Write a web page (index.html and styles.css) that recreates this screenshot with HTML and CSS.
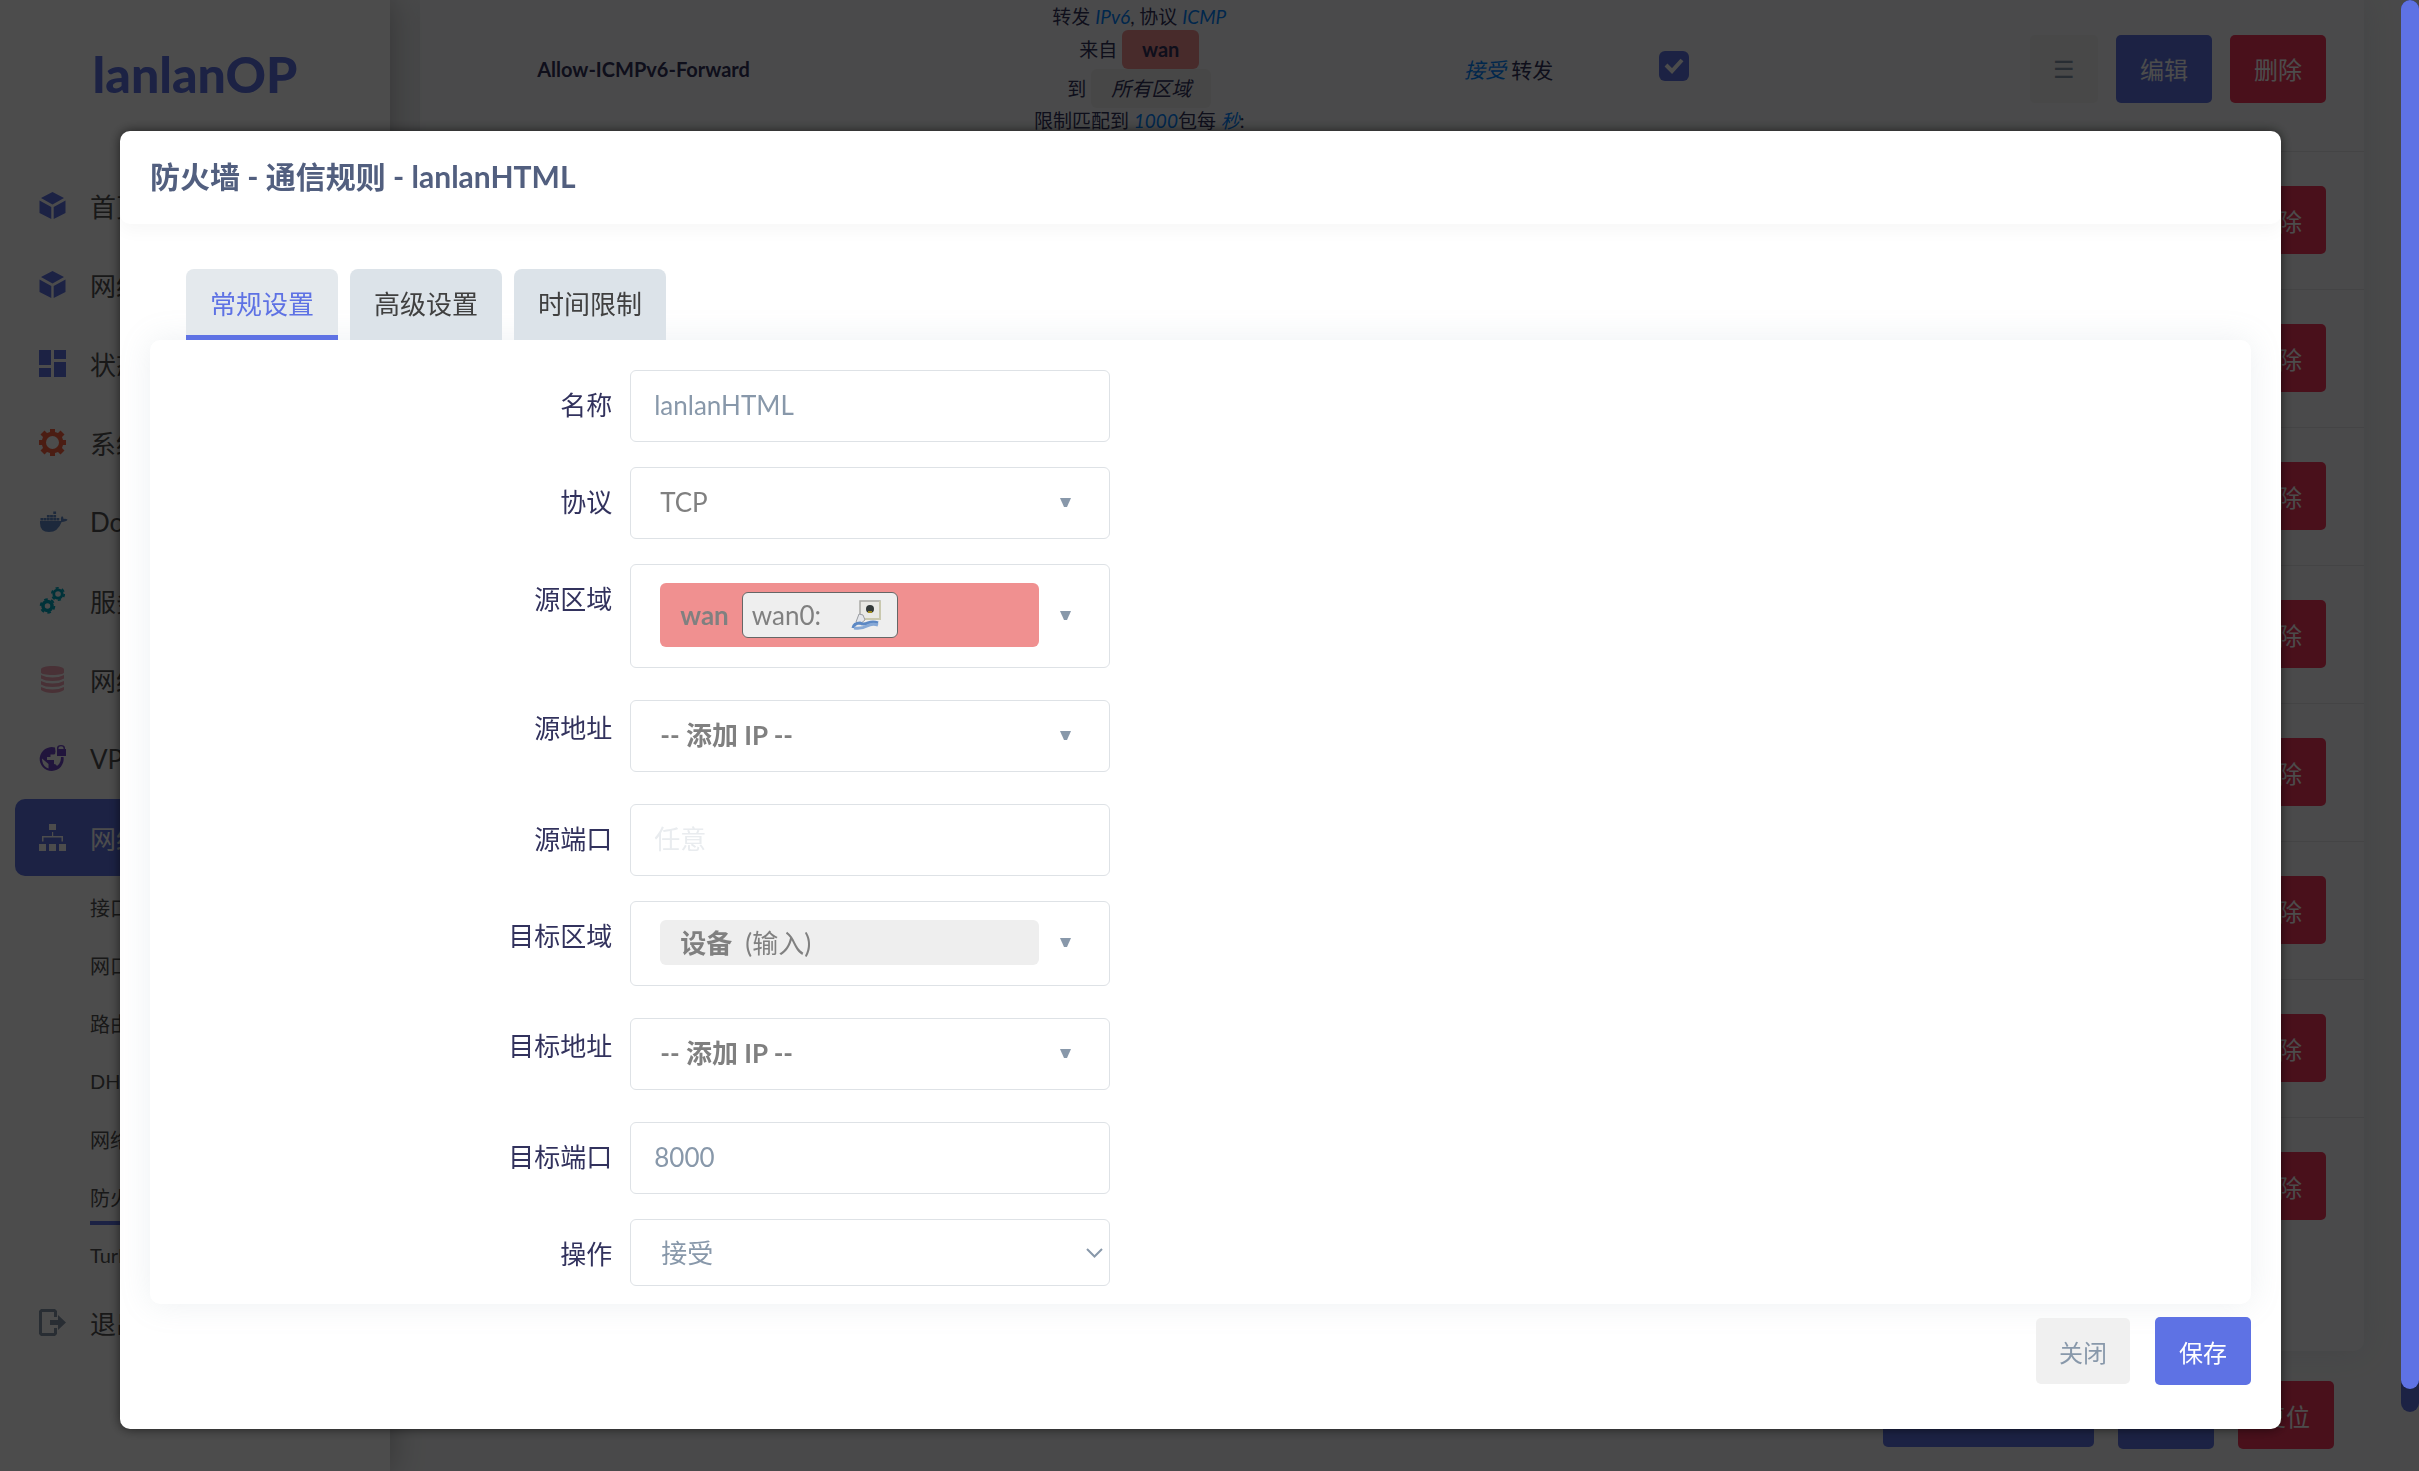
FILE: index.html
```html
<!DOCTYPE html>
<html lang="zh-CN">
<head>
<meta charset="utf-8">
<title>lanlanOP - 防火墙</title>
<link rel="stylesheet" href="styles.css">
</head>
<body>
<div class="app">
  <aside class="sidebar">
    <a class="brand" href="#">lanlanOP</a>
    <nav class="nav">
      <a class="nav-item" href="#"><svg class="icon indigo" viewBox="0 0 27 27"><path d="M13.500 0 25 6 13.500 12.500 2 6zM0.500 8.500 12.300 15V27L0.500 21zM26.500 8.500 14.700 15V27L26.500 21z"/></svg>首页</a>
      <a class="nav-item" href="#"><svg class="icon indigo" viewBox="0 0 27 27"><path d="M13.500 0 25 6 13.500 12.500 2 6zM0.500 8.500 12.300 15V27L0.500 21zM26.500 8.500 14.700 15V27L26.500 21z"/></svg>网络向导</a>
      <a class="nav-item" href="#"><svg class="icon indigo" viewBox="0 0 27 27"><path d="M0 0h12v15H0zM15 0h12v9H15zM0 18h12v9H0zM15 12h12v15H15z"/></svg>状态</a>
      <a class="nav-item" href="#"><svg class="icon orange" viewBox="0 0 27 27"><path fill-rule="evenodd" d="M11 0h5v3l3 1 2.500-2.500 4 4L23 8l1 3h3v5h-3l-1 3 2.500 2.500-4 4L19 23l-3 1v3h-5v-3l-3-1-2.500 2.500-4-4L4 19l-1-3H0v-5h3l1-3-2.500-2.500 4-4L8 4l3-1zM13.500 7a6.500 6.500 0 1 0 0 13 6.500 6.500 0 0 0 0-13z"/></svg>系统</a>
      <a class="nav-item" href="#"><svg class="icon docker" viewBox="0 0 27 27"><path d="M1 13h21q-1-3 1-5 1.500 1 1.600 3 2.500-.5 4 .8-1.500 2-6 2.200Q19 24 10 24 1 24 1 15zM1.500 10h2.800v2.500H1.500zM4.700 10h2.800v2.500H4.700zM7.900 10h2.800v2.500H7.900zM11.100 10h2.800v2.500h-2.800zM14.300 10h2.800v2.500h-2.800zM17.500 10h2.800v2.500h-2.800zM7.900 7h2.800v2.500H7.900zM11.100 7h2.800v2.500h-2.800zM14.300 7h2.800v2.500h-2.800zM14.300 3.500h2.800V6h-2.800z"/></svg>Docker</a>
      <a class="nav-item" href="#"><svg class="icon cyan" viewBox="0 0 27 27"><g fill="none" stroke="#00a9c0"><circle cx="8.500" cy="19" r="4.500" stroke-width="3.500"/><circle cx="8.500" cy="19" r="6.800" stroke-width="2" stroke-dasharray="3.600 3.520"/><circle cx="19" cy="7" r="4.200" stroke-width="2.800"/><circle cx="19" cy="7" r="6.200" stroke-width="1.800" stroke-dasharray="3.200 3.290"/></g></svg>服务</a>
      <a class="nav-item" href="#"><svg class="icon pink" viewBox="0 0 27 27"><path d="M2 3.500C2 1.500 7 0 13.500 0S25 1.500 25 3.500v3C25 8 20 9 13.500 9S2 8 2 6.500zM2 9q5 2.500 11.500 2.500T25 9v3.500q-4 2.500-11.500 2.500T2 12.500zM2 15q5 2.500 11.500 2.500T25 15v3.500q-4 2.500-11.500 2.500T2 18.500zM2 21q5 2.500 11.500 2.500T25 21v3q-4 3-11.500 3T2 24z"/></svg>网络存储</a>
      <a class="nav-item" href="#"><svg class="icon violet" viewBox="0 0 27 27"><path fill-rule="evenodd" d="M16 2.500A12 12 0 1 0 24.500 12h-2.600q.4 6-3.900 9-.8-2-3-2v-4H8v-3h3.500V9.500H15q1.500-.5 1.500-3zM3 13.500 9.500 19v4.500Q3 21 3 13.500z"/><path fill-rule="evenodd" d="M18 4V3a4 3 0 0 1 8 0v1h1v7h-9zM19.500 4h5V3a2.500 1.800 0 0 0-5 0z"/></svg>VPN</a>
      <a class="nav-item active" href="#"><svg class="icon white" viewBox="0 0 27 27"><path d="M10 0h7v6h-7zM13 8h1.200v4H24v5.500h-1.500v-4H4.500v4H3V12h10zM0 20h7v7H0zM10 20h7v7h-7zM20 20h7v7h-7z"/></svg>网络</a>
      <div class="subnav">
        <a href="#"><span>接口</span></a>
        <a href="#"><span>网口配置</span></a>
        <a href="#"><span>路由</span></a>
        <a href="#"><span>DHCP/DNS</span></a>
        <a href="#"><span>网络诊断</span></a>
        <a href="#" class="current"><span>防火墙</span></a>
        <a href="#"><span>Turbo ACC</span></a>
      </div>
      <a class="nav-item" href="#"><svg class="icon slate" viewBox="0 0 27 27"><path d="M2 0h14l2 2v6h-3V3H3v21h12v-5h3v6l-2 2H2l-2-2V2zM11 11h8V6l8 7.500-8 7.500v-5h-8z"/></svg>退出</a>
    </nav>
  </aside>

  <main class="main">
    <div class="card">
      <table class="rules">
        <colgroup><col class="c-name"><col class="c-match"><col class="c-action"><col class="c-on"><col></colgroup>
        <tbody>
          <tr class="first">
            <td class="name">Allow-ICMPv6-Forward</td>
            <td class="match">
              <div>转发 <var>IPv6</var>, 协议 <var>ICMP</var></div>
              <div class="zone-line">来自 <span class="zone wan"><b>wan</b></span></div>
              <div class="zone-line">到 <span class="zone any"><em>所有区域</em></span></div>
              <div>限制匹配到 <var>1000</var>包每 <var>秒</var>:</div>
            </td>
            <td class="verdict"><var>接受</var> 转发</td>
            <td class="enabled"><input class="check" type="checkbox" aria-label="启用" checked></td>
            <td class="ops"><div><button class="btn light">☰</button><button class="btn primary">编辑</button><button class="btn danger">删除</button></div></td>
          </tr>
          <tr><td></td><td></td><td></td><td></td><td class="ops"><div><button class="btn danger">删除</button></div></td></tr>
          <tr><td></td><td></td><td></td><td></td><td class="ops"><div><button class="btn danger">删除</button></div></td></tr>
          <tr><td></td><td></td><td></td><td></td><td class="ops"><div><button class="btn danger">删除</button></div></td></tr>
          <tr><td></td><td></td><td></td><td></td><td class="ops"><div><button class="btn danger">删除</button></div></td></tr>
          <tr><td></td><td></td><td></td><td></td><td class="ops"><div><button class="btn danger">删除</button></div></td></tr>
          <tr><td></td><td></td><td></td><td></td><td class="ops"><div><button class="btn danger">删除</button></div></td></tr>
          <tr><td></td><td></td><td></td><td></td><td class="ops"><div><button class="btn danger">删除</button></div></td></tr>
          <tr><td></td><td></td><td></td><td></td><td class="ops"><div><button class="btn danger">删除</button></div></td></tr>
        </tbody>
      </table>
    </div>
    <div class="page-actions">
      <button class="btn primary apply">保存并应用</button>
      <button class="btn primary">保存</button>
      <button class="btn danger">复位</button>
    </div>
  </main>
  <div class="page-scroll"></div>
</div>

<div class="overlay">
  <section class="modal" role="dialog" aria-labelledby="dlg-title">
    <h4 class="modal-title" id="dlg-title">防火墙 - 通信规则 - lanlanHTML</h4>
    <div class="modal-body">
      <div class="tabs" role="tablist">
        <button class="tab selected" role="tab" aria-selected="true">常规设置</button>
        <button class="tab" role="tab">高级设置</button>
        <button class="tab" role="tab">时间限制</button>
      </div>
      <form class="panel">
        <div class="row">
          <label for="f-name">名称</label>
          <input class="field" id="f-name" type="text" value="lanlanHTML">
        </div>
        <div class="row">
          <label for="f-proto">协议</label>
          <button type="button" class="field drop" id="f-proto"><span>TCP</span><svg class="arrow" viewBox="0 0 11 9"><path d="M0 0h11L7 9H4z"/></svg></button>
        </div>
        <div class="row">
          <label for="f-src">源区域</label>
          <button type="button" class="field drop" id="f-src">
            <span class="badge red"><b>wan</b>
              <span class="iface">wan0:
                <svg class="port" viewBox="0 0 30 30"><path d="M9 1h20v18H9z" fill="#e9e9e5" stroke="#a9a9a5" stroke-width="1.500"/><path d="M29 1v18H9" fill="none" stroke="#c9c8ae" stroke-width="2"/><circle cx="19" cy="9" r="4" fill="#333a3a"/><path d="M17 11h4v2h-4z" fill="#a08d20"/><path d="M8 14l4 1 2 5-5 4-4-2z" fill="#e4e6ea" stroke="#9a9da3"/><path d="M2 28q1-5 7-5 3 2 8 0 5-2 10 0" fill="none" stroke="#5c88c4" stroke-width="3"/><path d="M3 28q8 1 13-2t11-1" fill="none" stroke="#86a8d6" stroke-width="3"/></svg>
              </span>
            </span>
            <svg class="arrow" viewBox="0 0 11 9"><path d="M0 0h11L7 9H4z"/></svg>
          </button>
        </div>
        <div class="row list">
          <label for="f-srcip">源地址</label>
          <button type="button" class="field drop" id="f-srcip"><b>-- 添加 IP --</b><svg class="arrow" viewBox="0 0 11 9"><path d="M0 0h11L7 9H4z"/></svg></button>
        </div>
        <div class="row">
          <label for="f-sport">源端口</label>
          <input class="field" id="f-sport" type="text" placeholder="任意">
        </div>
        <div class="row">
          <label for="f-dst">目标区域</label>
          <button type="button" class="field drop" id="f-dst"><span class="badge gray"><b>设备</b><span>(输入)</span></span><svg class="arrow" viewBox="0 0 11 9"><path d="M0 0h11L7 9H4z"/></svg></button>
        </div>
        <div class="row list">
          <label for="f-dstip">目标地址</label>
          <button type="button" class="field drop" id="f-dstip"><b>-- 添加 IP --</b><svg class="arrow" viewBox="0 0 11 9"><path d="M0 0h11L7 9H4z"/></svg></button>
        </div>
        <div class="row">
          <label for="f-dport">目标端口</label>
          <input class="field" id="f-dport" type="text" value="8000">
        </div>
        <div class="row">
          <label for="f-target">操作</label>
          <div class="select-wrap">
            <select class="field" id="f-target"><option>接受</option></select>
            <svg class="chevron" viewBox="0 0 17 10"><path d="M1 1l7.500 7.500L16 1"/></svg>
          </div>
        </div>
      </form>
      <div class="modal-actions">
        <button class="btn close">关闭</button>
        <button class="btn primary">保存</button>
      </div>
    </div>
  </section>
  <div class="overlay-scroll"></div>
</div>
</body>
</html>
```
FILE: styles.css
```css
* { box-sizing: border-box; }

html, body { height: 100%; margin: 0; overflow: hidden; }

body {
  font-family: Lato, "Noto Sans CJK SC", sans-serif;
  font-size: 26px;
  color: #32325d;
  background: #f4f5f7;
}

button, input, select { font: inherit; margin: 0; }
button { border: 0; cursor: pointer; }
a { color: inherit; text-decoration: none; }

/* page behind the dialog */
.app { display: flex; height: 100vh; overflow: hidden; }

.sidebar {
  flex: 0 0 390px;
  background: #fff;
  box-shadow: 0 0 32px rgba(0, 0, 0, .3);
  z-index: 1;
}

.brand {
  display: block;
  padding-top: 44px;
  height: 167px;
  font-size: 50px;
  font-weight: 900;
  line-height: 60px;
  text-align: center;
  color: #5e72e4;
}

.nav-item {
  display: flex;
  align-items: center;
  gap: 24px;
  height: 77px;
  margin: 0 15px 2px;
  padding-left: 24px;
  border-radius: 10px;
  color: #525252;
  white-space: nowrap;
}
.nav-item.active { background: #5e72e4; color: #fff; }

.icon { width: 27px; height: 27px; overflow: visible; }
.indigo { fill: #5e72e4; }
.orange { fill: #fb6340; }
.docker { fill: #6189c8; }
.pink { fill: #f3a4b5; }
.violet { fill: #7048c8; }
.white { fill: #fff; }
.slate { fill: #8898aa; }

.subnav { padding-left: 90px; font-size: 20px; color: #525252; }
.subnav a { display: flex; align-items: center; height: 58px; }
.current { position: relative; }
.current::after {
  content: "";
  position: absolute;
  left: 0;
  bottom: 1px;
  width: 60px;
  height: 4px;
  background: #5e72e4;
}

.main { flex: 1; padding: 0 37px 0 30px; }

.card {
  background: #f8f9fb;
  border-radius: 0 0 10px 10px;
  padding-bottom: 96px;
  box-shadow: 0 0 32px rgba(136, 152, 170, .15);
}

.rules { width: 100%; table-layout: fixed; border-collapse: collapse; text-align: center; }
.rules td { height: 138px; padding: 0; border-bottom: 1px solid #e4e5e8; }
.rules tr:last-child td { border-bottom: 0; }
.rules .first td { height: 151px; padding-bottom: 13px; }
.rules .first .enabled { padding-bottom: 22px; }
.c-name { width: 23%; }
.c-match { width: 28%; }
.c-action { width: 10%; }
.c-on { width: 7%; }

.name { font-size: 20px; font-weight: 700; }
.match { font-size: 19px; line-height: 26px; }
.zone-line { line-height: 39px; }
.zone { display: inline-block; height: 39px; padding: 0 20px; border-radius: 6px; font-size: 20px; }
.wan { background: #f09090; }
.any { background: #eee; }
.verdict { font-size: 21px; }
.rules var { color: #0082ff; }

.check {
  appearance: none;
  width: 30px;
  height: 30px;
  margin: 0;
  vertical-align: middle;
  border-radius: 6px;
  background: #5e72e4 url('data:image/svg+xml,<svg xmlns="http://www.w3.org/2000/svg" viewBox="0 0 30 30"><path d="M7 14l6 6L23 9" fill="none" stroke="white" stroke-width="4"/></svg>');
}

.ops > div { display: flex; justify-content: flex-end; gap: 18px; padding-right: 38px; }

.btn {
  height: 68px;
  padding: 0 23px;
  border-radius: 5px;
  font-size: 24px;
  color: #fff;
}
.primary, .danger { padding: 0 24px; }
.primary { background: #5e72e4; }
.danger { background: #f5365c; }
.light { background: #f0f0f0; color: #8898aa; }

.page-actions { display: flex; justify-content: flex-end; gap: 24px; padding: 30px 30px 0 0; }
.apply { width: 211px; height: 66px; }

.page-scroll, .overlay-scroll { background: #5e72e4; border-radius: 9px; }
.page-scroll { flex: 0 0 18px; height: 96%; }

/* dialog */
.overlay {
  position: fixed;
  inset: 0;
  z-index: 10;
  display: flex;
  justify-content: space-between;
  align-items: flex-start;
  background: rgba(0, 0, 0, .7);
}
.overlay-scroll { width: 18px; height: 94.4vh; }

.modal {
  flex: 1;
  margin: 131px 120px 0;
  background: #fff;
  border-radius: 10px;
  box-shadow: 0 0 12px rgba(0, 0, 0, .6);
}

.modal-title {
  margin: 0;
  padding: 23px 30px 26px;
  border-radius: 10px;
  font-size: 30px;
  line-height: 44px;
  color: #525f7f;
  box-shadow: 0 8px 16px rgba(0, 0, 0, .03);
}

.modal-body { padding: 45px 30px 44px; }

.tabs { display: flex; gap: 12px; padding-left: 36px; }
.tab {
  height: 71px;
  padding: 0 24px 5px;
  border-radius: 8px 8px 0 0;
  background: #dce3e9;
  color: #404040;
}
.selected { padding-bottom: 0; background: #e4e9ed; color: #5e72e4; border-bottom: 5px solid #5e72e4; }

.panel {
  display: flex;
  flex-direction: column;
  gap: 25px;
  padding: 30px 0 18px;
  border-radius: 10px;
  background: #fff;
  box-shadow: 0 0 32px rgba(136, 152, 170, .15);
}
.row { display: flex; align-items: flex-start; }
.row label {
  flex: 0 0 22%;
  padding-top: 16px;
  line-height: 38px;
  text-align: right;
}

.field {
  width: 480px;
  height: 72px;
  margin-left: 18px;
  padding: 0 23px 2px;
  border: 1px solid #dee2e6;
  border-radius: 6px;
  background: #fff;
  color: #8898aa;
  outline: 0;
}
.field::placeholder { color: #e9ecef; opacity: 1; }
.list .field { margin: 7px 0 7px 18px; }

.drop {
  display: flex;
  align-items: center;
  justify-content: space-between;
  height: auto;
  min-height: 72px;
  padding: 18px 38px 20px 29px;
  line-height: 32px;
  text-align: left;
  color: #808080;
}
.arrow { width: 11px; height: 9px; fill: #8898aa; }

.badge {
  display: flex;
  align-items: center;
  gap: 13px;
  width: 379px;
  padding: 0 20px;
  border-radius: 6px;
}
.red { height: 64px; background: #f09090; }
.gray { height: 45px; background: #eee; }

.iface {
  display: flex;
  align-items: center;
  gap: 30px;
  height: 46px;
  padding: 0 16px 0 9px;
  border: 1px solid #666;
  border-radius: 6px;
  background: #eee;
}
.port { width: 30px; height: 30px; }

.select-wrap { position: relative; margin-left: 18px; }
.select-wrap .field { display: block; height: 67px; margin: 0; padding: 0 30px; appearance: none; }
.chevron {
  position: absolute;
  right: 7px;
  top: 29px;
  width: 17px;
  height: 10px;
  fill: none;
  stroke: #8898aa;
  stroke-width: 2;
  pointer-events: none;
}

.modal-actions { display: flex; justify-content: flex-end; align-items: center; gap: 25px; padding-top: 13px; }
.close { height: 66px; background: #f0f0f0; color: #8898aa; }
```
